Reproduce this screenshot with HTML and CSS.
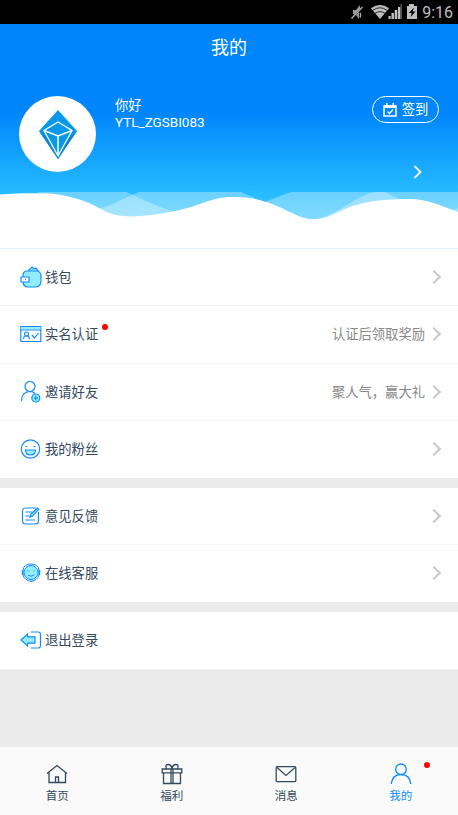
FILE: index.html
```html
<!DOCTYPE html>
<html lang="zh-CN">
<head>
<meta charset="utf-8">
<title>我的</title>
<link rel="stylesheet" href="styles.css">
</head>
<body>
<div class="app">
  <div class="status">
    <svg width="68" height="24" viewBox="350 0 68 24">
      <g fill="none" stroke="#aaa" stroke-width="1.4"><path d="M352.500 18.500 363.500 7"/><path d="M361 13c1 1.500 1 3 0 4.500"/></g>
      <path d="M354 10h3l4-5v4l-5 5h-2zM357 15l3-3v7z" fill="#999"/>
      <path d="M372 8.200Q381 1.800 390 8.200L381 19z" fill="#bebebe"/>
      <path d="M373.500 10.500Q381 5 388.500 10.500M376 13.300Q381 10 386 13.300" fill="none" stroke="#000" stroke-width=".8"/>
      <path d="M389.500 19v-3h2.200v3zM392.500 19v-6h2.400v6zM395.700 19V10h2.600v9zM399 19V7h2.500v12z" fill="#c2c2c2"/><path d="M401.500 19V4h1.500v15z" fill="#555"/>
      <path d="M408 6h2V4h5v2h3v13h-10z" fill="#bebebe"/><path d="M415 7.500 409.800 13h2.800l-1 4 5-5.500h-3z" fill="#000"/>
    </svg>
    <span class="clock">9:16</span>
  </div>
  <header class="hero">
    <h1>我的</h1>
    <div class="profile">
      <div class="avatar">
        <svg width="38" height="49" viewBox="0 0 38 49">
          <path d="M19 0 38 21 19 49 0 21z" fill="#0799e9"/>
          <path d="M0 21 19 49 38 21 19 38z" fill="#0a86d4"/>
          <path d="M19 12 33 20.500 19 46 5 20.500z" fill="#0799e9" stroke="#fff" stroke-width="1.300"/>
          <path d="M5 20.500 19 26l14-5.500M19 26v20" fill="none" stroke="#fff" stroke-width="1.500"/>
        </svg>
      </div>
      <div class="who"><div>你好</div><div class="name">YTL_ZGSBI083</div></div>
      <div class="side">
        <div class="sign">
          <svg width="14" height="14" viewBox="0 0 14 14"><path d="M1 3h12v10H1z" fill="none" stroke="#fff" stroke-width="1.500"/><path d="M1 2h12v3H1zM3 0h1.500v3H3zM9.500 0H11v3H9.500z" fill="#fff"/><path d="m4.500 8.500 2 2 3.500-4" fill="none" stroke="#fff" stroke-width="1.400"/></svg>
          <span>签到</span>
        </div>
        <svg class="go" width="9" height="14" viewBox="0 0 9 14"><path d="m1.500 1 6 6-6 6" fill="none" stroke="#fff" stroke-width="1.800"/></svg>
      </div>
    </div>
    <svg class="wave" width="458" height="56" viewBox="0 192 458 56">
      <g fill="#fff">
        <path d="M36 192H126C140 198 155 206 175 212L160 225H100C80 210 55 196 36 192z" opacity=".32"/>
        <path d="M101 208C114 205 125 197 139 192H241C255 198 265 203 280 212V228H101z" opacity=".32"/>
        <path d="M265 202C276 198 284 194 292 192H385C395 197 407 204 425 210V228H270z" opacity=".32"/>
        <path d="M316 219C338 215 357 194 377 192H458V230H316z" opacity=".32"/>
        <path d="M448 212 458 208V220z" opacity=".32"/>
        <path d="M0 194.500C18 193 35 193 50 193.500C72 196 87 201 101 209C118 220 143 217 173 211.500C201 206 211 197 232 197C260 196.500 275 205 292 213C306 220 317 222 332 215C348 208 360 199 410 199C427 199 442 206 458 212V248H0z"/>
      </g>
    </svg>
  </header>
  <main>
    <section class="group">
      <div class="row">
        <svg class="icon" viewBox="0 0 22 22"><g fill="#91edff" stroke="#168bff" stroke-width="1.200"><path d="m8 5 4-4 2 2 2-1 3 4"/><path d="M6 5h11q4 1 4 5v5q0 6-6 6H8q-5 0-5-6V9q0-3 3-4z"/><path d="M1 11h8v5H1z" fill="#fff"/><path d="M5 13.500h1"/></g></svg>
        <span class="label">钱包</span><i class="arrow"></i>
      </div>
      <div class="row">
        <svg class="icon" viewBox="0 0 22 22"><g fill="none" stroke="#168bff" stroke-width="1.200"><path d="M.8 3.500h20v15H.8z" fill="#fff"/><path d="M1 4h19.500v2.500H1z" fill="#91edff" stroke="none"/><path d="M1 7h20M3.500 16q0-3 3-3t3 3M12 12l2.500 3 4-5"/><circle cx="6.500" cy="11" r="2"/></g></svg>
        <span class="label">实名认证<b class="dot"></b></span><span class="hint">认证后领取奖励</span><i class="arrow"></i>
      </div>
      <div class="row">
        <svg class="icon" viewBox="0 0 22 22"><g fill="none" stroke="#168bff" stroke-width="1.200"><circle cx="10" cy="5.500" r="5"/><path d="M1.500 20q0-9 8.500-9.500 3 0 5 2"/><circle cx="15.800" cy="17" r="4" fill="#91edff"/><path d="M13.500 17h4.600M15.800 14.700v4.600"/></g></svg>
        <span class="label">邀请好友</span><span class="hint">聚人气<span class="comma">，</span>赢大礼</span><i class="arrow"></i>
      </div>
      <div class="row">
        <svg class="icon" viewBox="0 0 22 22"><g fill="none" stroke="#168bff" stroke-width="1.200"><circle cx="10.500" cy="11" r="9.200"/><path d="M5.500 12h10q0 5-5 5t-5-5z" fill="#91edff"/><path d="M5.500 8.500h2M13.500 8.500h2"/></g></svg>
        <span class="label">我的粉丝</span><i class="arrow"></i>
      </div>
    </section>
    <section class="group">
      <div class="row">
        <svg class="icon" viewBox="0 0 22 22"><g fill="none" stroke="#168bff" stroke-width="1.200"><path d="M16 3H6Q2.500 3 2.500 6v10q0 3 3.500 3h9q3.500 0 3.500-3V7"/><path d="M5.500 7h7M5.500 11h4M5.500 15H15"/><path d="m10 12 1-3 6.500-6 1.300 1.300-6.500 7z" fill="#91edff"/></g></svg>
        <span class="label">意见反馈</span><i class="arrow"></i>
      </div>
      <div class="row">
        <svg class="icon" viewBox="0 0 22 22"><g fill="none" stroke="#168bff"><path d="M3 8Q4 2 11 2T19 8"/><circle cx="11" cy="10.500" r="7" fill="#91edff"/><path d="M8 8.500v1M14 8.500v1M8 13q3 2.500 6 0"/><path d="M2.700 8v5M19.300 8v5" stroke-width="1.800"/><path d="M3 13q1.500 5.500 8 6.300 6.500-.8 8-6.300M10 19.300h2.500"/></g></svg>
        <span class="label">在线客服</span><i class="arrow"></i>
      </div>
    </section>
    <section class="group">
      <div class="row">
        <svg class="icon" viewBox="0 0 22 22"><g fill="none" stroke="#168bff" stroke-width="1.200"><path d="M11 3h7q2.500 0 2.500 2.500v11Q20.500 19 18 19h-7"/><path d="M1 11 7.500 5v2.800H15v6.400H7.500V17z" fill="#91edff"/></g></svg>
        <span class="label">退出登录</span>
      </div>
    </section>
  </main>
  <nav>
    <div class="tab"><svg width="22" height="22" viewBox="0 0 22 22"><path d="m1 10.500 10-8 10 8M3 9v10.500h16.500V9M9.500 19v-5h3v5"/></svg><span>首页</span></div>
    <div class="tab"><svg width="22" height="22" viewBox="0 0 22 22"><path d="M1.200 6h19.600v3.800H1.200zM2.500 10v10.500h17V10M10 6v14M12 6v14M5.500 5.500q-2-4 2-4 2.500 0 3.500 4 1-4 3.500-4 4 0 2 4"/></svg><span>福利</span></div>
    <div class="tab"><svg width="22" height="22" viewBox="0 0 22 22"><rect x="1.200" y="3.700" width="19.600" height="15" rx="1"/><path d="m2 4.500 9 8 9-8"/></svg><span>消息</span></div>
    <div class="tab active"><svg width="22" height="22" viewBox="0 0 22 22"><circle cx="11" cy="6.300" r="5.300"/><path d="M1.200 21q1-9.500 9.800-9.500T20.800 21"/></svg><span>我的</span><b class="dot"></b></div>
  </nav>
</div>
</body>
</html>
```
FILE: styles.css
```css
* { box-sizing: border-box; }
body { margin: 0; font-family: Roboto, "Noto Sans CJK SC", sans-serif; color: #34495e; }
.app { width: 458px; height: 815px; display: flex; flex-direction: column; background: #ebebeb; overflow: hidden; }
svg { display: block; flex: none; }
.status { height: 24px; flex: none; background: #000; display: flex; justify-content: flex-end; align-items: center; padding-right: 5px; gap: 5px; }
.clock { font-size: 16px; line-height: 24px; color: #bebebe; padding-top: 1px; }
.hero { height: 225px; flex: none; display: flex; flex-direction: column; color: #fff; background: linear-gradient(#0085fc 0, #0085fc 88px, #25bbff 168px, #45caff 195px, #45caff 100%); border-bottom: 1px solid #e2f4fa; }
h1 { margin: 0; height: 48px; line-height: 48px; text-align: center; font-size: 18px; font-weight: 400; }
.profile { display: flex; height: 120px; padding: 24px 19px 0; }
.avatar { width: 77px; height: 76px; border-radius: 50%; background: #fff; display: flex; align-items: center; justify-content: center; }
.who { margin-left: 19px; padding-top: 1px; font-size: 13.3px; line-height: 17px; flex: 1; }
.name { font-size: 13.500px; }
.side { display: flex; flex-direction: column; }
.sign { width: 67px; height: 27px; border: 1px solid #fff; border-radius: 14px; display: flex; align-items: center; justify-content: center; gap: 5px; font-size: 13.3px; line-height: 25px; }
.go { margin: 42px 0 0 41px; }
.group { background: #fff; margin-bottom: 9.500px; }
.row { height: 57.300px; display: flex; align-items: center; padding: 0 17px 0 20px; border-bottom: 1px solid #f5f5f5; }
.row:last-child { border-bottom-color: #fff; }
.icon { width: 22px; height: 22px; }
.label { position: relative; margin-left: 3px; padding-top: 2px; font-size: 13.3px; line-height: 20px; }
.dot { position: absolute; width: 6px; height: 6px; border-radius: 50%; background: #f00; }
.label .dot { right: -10px; top: 1px; }
.hint { margin-left: auto; margin-right: 4px; padding-top: 2px; color: #888; font-size: 13.3px; line-height: 20px; }
.comma { font-family: "Noto Sans CJK TC", sans-serif; }
.arrow { width: 10px; height: 10px; border: solid #c7c7cc; border-width: 2px 2px 0 0; transform: rotate(45deg); margin-left: auto; margin-right: 2px; }
.hint + .arrow { margin-left: 0; }
nav { margin-top: auto; height: 68px; flex: none; background: #fafafa; display: grid; grid-template-columns: repeat(4, 1fr); }
.tab { position: relative; display: flex; flex-direction: column; align-items: center; padding-top: 16px; font-size: 11.500px; line-height: 16px; gap: 3px; }
.tab svg { fill: none; stroke: #34495e; stroke-width: 1.300; }
.active { color: #0c8cff; }
.active svg { stroke: #0c8cff; }
.tab .dot { left: 80px; top: 15px; }
```
